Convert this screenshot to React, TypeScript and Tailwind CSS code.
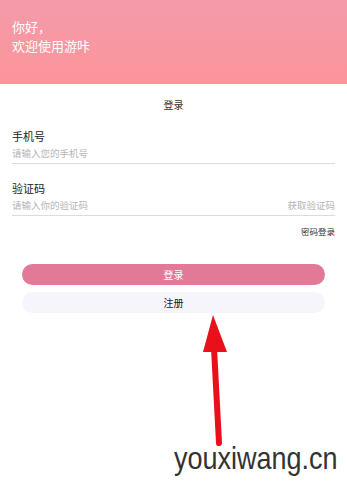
export default function App() {
  const font = { fontFamily: '"Noto Sans CJK SC", "Noto Sans", sans-serif' };
  return (
    <div className="relative w-[347px] h-[482px] bg-white overflow-hidden" style={font}>
      <div className="h-[84px] bg-gradient-to-b from-[#f39bab] to-[#fd9499] px-3 pt-[17px] text-white text-[13px] leading-[19px]">
        <div>你好，</div>
        <div>欢迎使用游咔</div>
      </div>

      <div className="px-3">
        <div className="text-center text-[10px] text-[#333] mt-[14px] leading-[14px]">登录</div>

        <div className="mt-[16px] text-[11px] text-[#222] leading-[16px]">手机号</div>
        <div className="mt-[2px] pb-[3px] border-b border-[#dcdcdc] text-[9.5px] text-[#b5b5b5] leading-[14px]">
          请输入您的手机号
        </div>

        <div className="mt-[16px] text-[11px] text-[#222] leading-[16px]">验证码</div>
        <div className="mt-[2px] pb-[3px] border-b border-[#dcdcdc] text-[9.5px] text-[#b5b5b5] leading-[14px] flex justify-between">
          <span>请输入你的验证码</span>
          <span>获取验证码</span>
        </div>

        <div className="mt-[9px] text-right text-[8.5px] text-[#333] leading-[12px]">密码登录</div>
      </div>

      <div className="px-[22px] mt-[27px] flex flex-col gap-[7px]">
        <div className="h-[21px] rounded-full bg-[#e27a97] text-white text-[10px] flex items-center justify-center">
          登录
        </div>
        <div className="h-[21px] rounded-full bg-[#f5f5fb] text-[#222] text-[10px] flex items-center justify-center">
          注册
        </div>
      </div>

      <svg className="absolute left-0 top-0" width="347" height="482" viewBox="0 0 347 482">
        <line x1="214" y1="348" x2="219" y2="443" stroke="#e8111b" strokeWidth="6" strokeLinecap="round" />
        <polygon points="213,315 203,352 227,352" fill="#e8111b" />
      </svg>

      <div
        className="absolute left-[174px] top-[446px] text-[27px] text-[#333] leading-[30px] origin-bottom scale-y-[1.15]"
        style={{ fontFamily: '"Liberation Sans", Arial, sans-serif' }}
      >
        youxiwang.cn
      </div>
    </div>
  );
}
